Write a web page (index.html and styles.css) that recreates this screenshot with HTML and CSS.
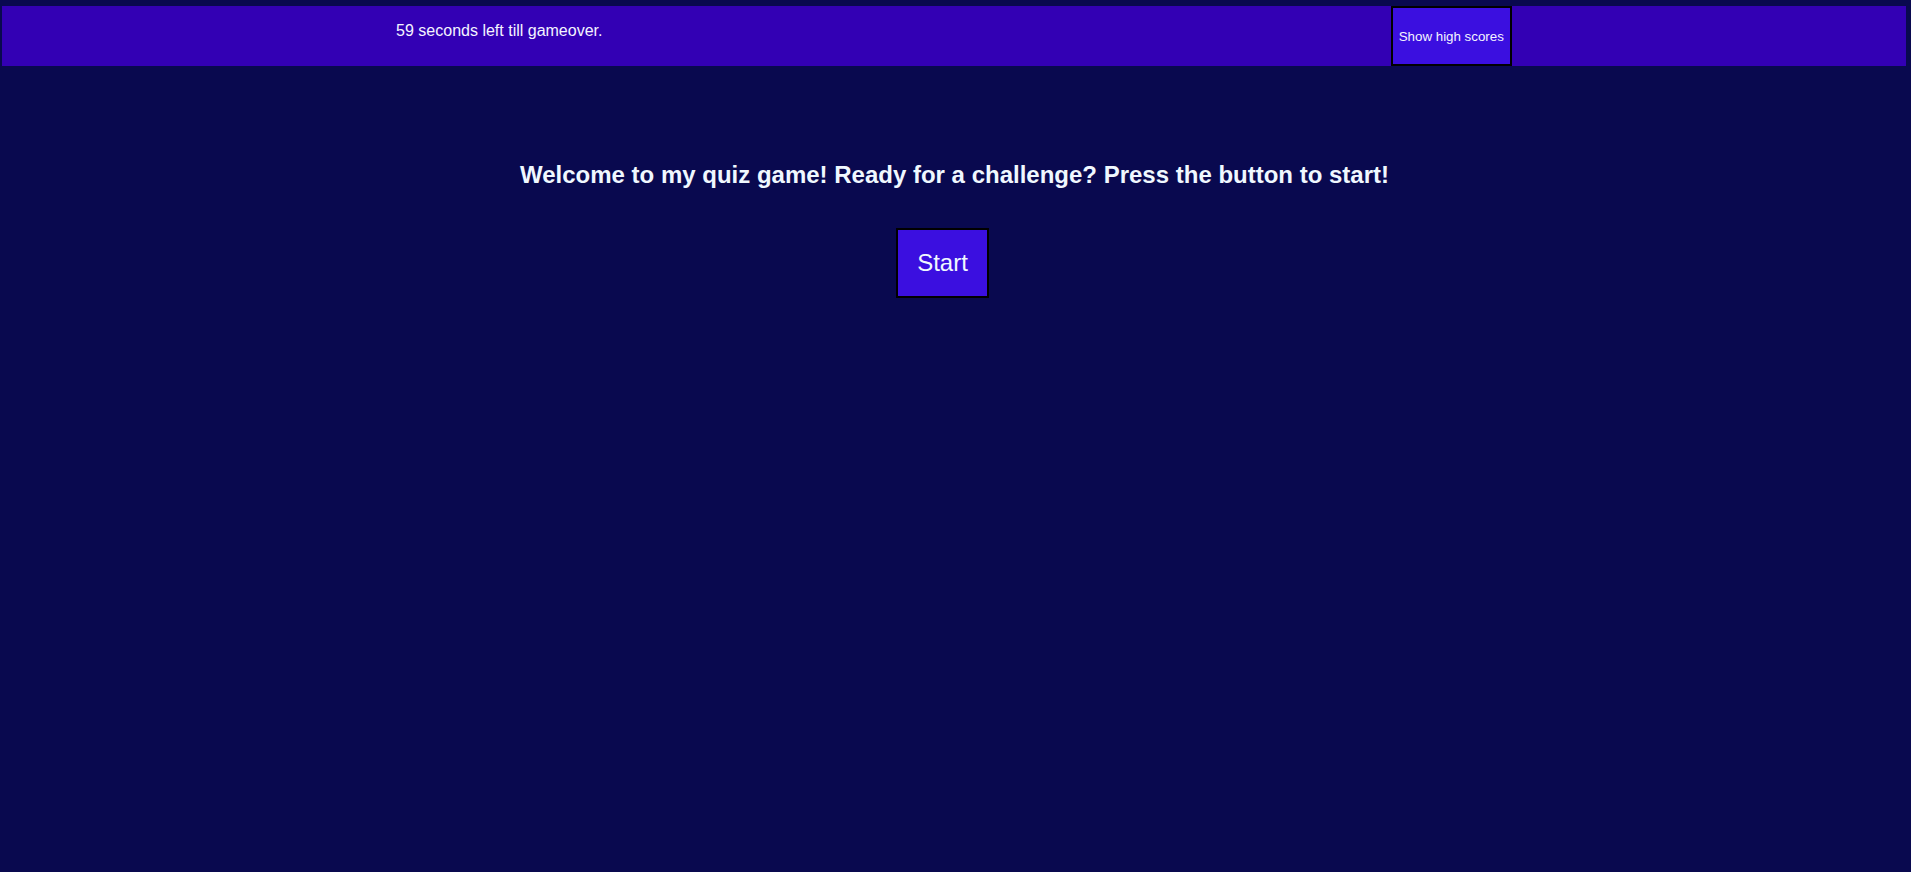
FILE: index.html
```html
<!DOCTYPE html>
<html lang="en">
<head>
<meta charset="utf-8">
<title>Quiz Game</title>
<link rel="stylesheet" href="styles.css">
</head>
<body>
<header class="topbar">
  <p class="timer">59 seconds left till gameover.</p>
  <button class="scores-btn">Show high scores</button>
</header>
<main class="intro">
  <h2 class="welcome">Welcome to my quiz game! Ready for a challenge? Press the button to start!</h2>
  <div class="start-row">
    <button class="start-btn">Start</button>
  </div>
</main>
</body>
</html>
```
FILE: styles.css
```css
html, body {
  margin: 0;
  padding: 0;
  background: #09094f;
  font-family: "Liberation Sans", Arial, sans-serif;
  color: #ffffff;
  height: 100%;
}

.topbar {
  display: flex;
  justify-content: space-around;
  align-items: stretch;
  background: #3300b4;
  height: 60px;
  margin: 6px 5px 0 2px;
}

.timer {
  margin: 0;
  padding-top: 16px;
  font-size: 16px;
  color: #f4f4ff;
}

.scores-btn {
  font-family: "Liberation Sans", Arial, sans-serif;
  font-size: 13.333px;
  color: #f4f4ff;
  background: #3b0fe0;
  border: 2px solid #000000;
  padding: 1px 6px;
  margin: 0;
}

.intro {
  padding-top: 95px;
  padding-right: 2px;
  text-align: center;
}

.welcome {
  margin: 0;
  font-size: 24px;
  font-weight: bold;
  color: #f0f8ff;
}

.start-row {
  margin-top: 39px;
  display: flex;
  justify-content: center;
}

.start-btn {
  font-family: "Liberation Sans", Arial, sans-serif;
  font-size: 24px;
  color: #f0f8ff;
  background: #3b0fe0;
  border: 2px solid #000000;
  padding: 19px 19px;
  margin: 0 24px 0 0;
}
```
